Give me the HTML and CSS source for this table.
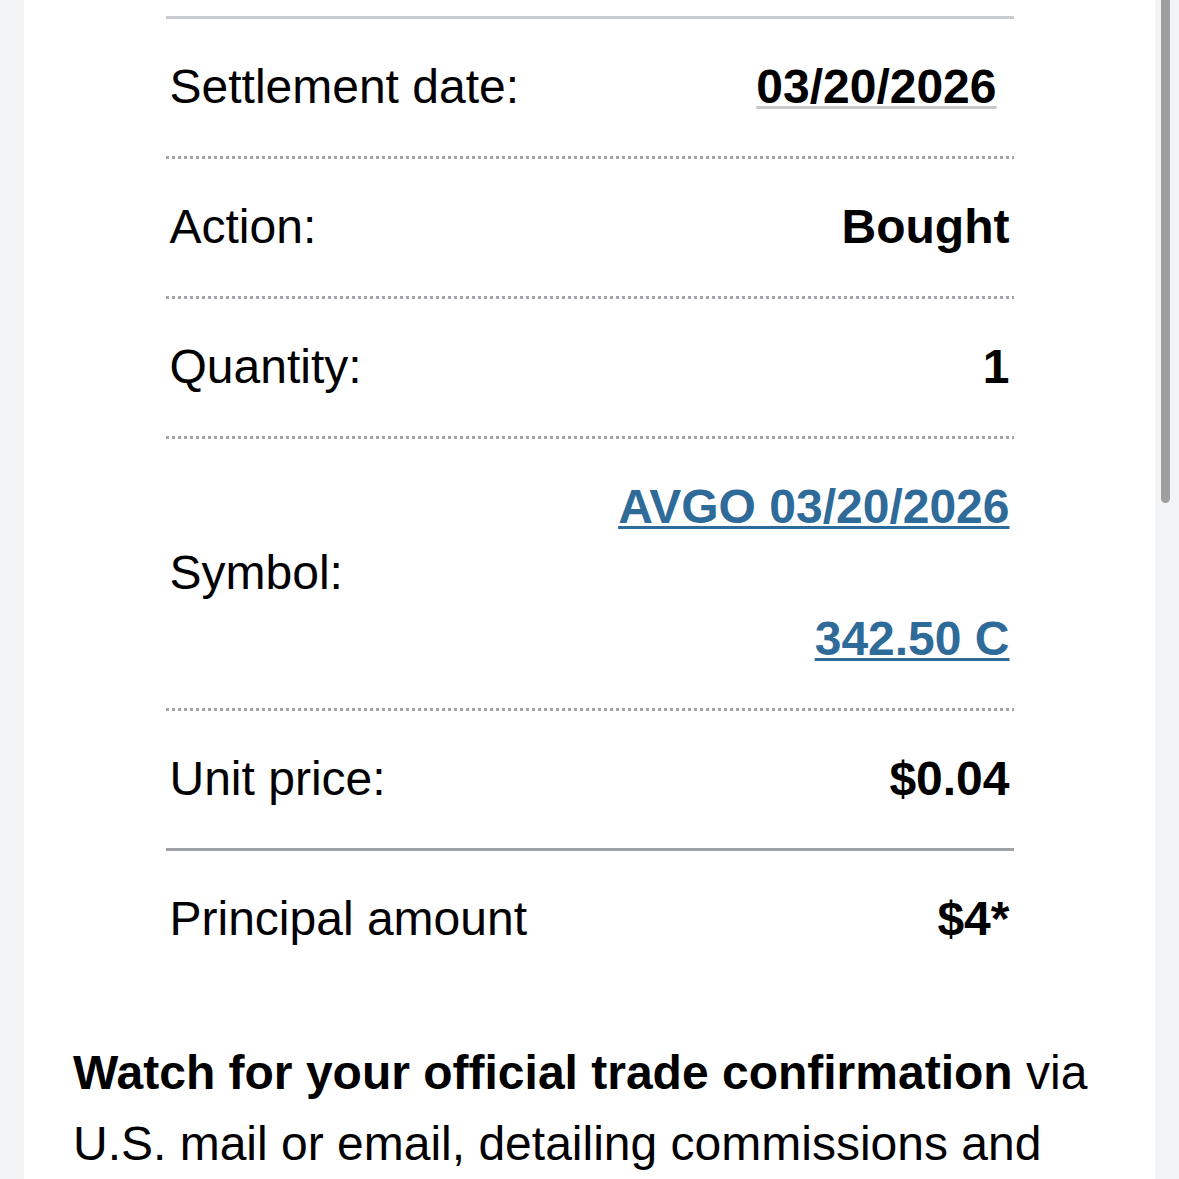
FILE: index.html
```html
<!DOCTYPE html>
<html lang="en">
<head>
<meta charset="utf-8">
<title>Trade details</title>
<link rel="stylesheet" href="styles.css">
</head>
<body>
<div class="card">
  <div class="details">
    <div class="sep solid-light"></div>
    <div class="row">
      <div class="label">Settlement date:</div>
      <div class="value"><span class="date">03/20/2026</span></div>
    </div>
    <div class="sep dotted"></div>
    <div class="row">
      <div class="label">Action:</div>
      <div class="value">Bought</div>
    </div>
    <div class="sep dotted"></div>
    <div class="row">
      <div class="label">Quantity:</div>
      <div class="value">1</div>
    </div>
    <div class="sep dotted"></div>
    <div class="row">
      <div class="label">Symbol:</div>
      <div class="value symbol">
        <a class="link" href="#">AVGO 03/20/2026</a>
        <a class="link" href="#">342.50 C</a>
      </div>
    </div>
    <div class="sep dotted"></div>
    <div class="row">
      <div class="label">Unit price:</div>
      <div class="value">$0.04</div>
    </div>
    <div class="sep solid-dark"></div>
    <div class="row last">
      <div class="label">Principal amount</div>
      <div class="value">$4*</div>
    </div>
  </div>
  <p class="note"><strong>Watch for your official trade confirmation</strong> via U.S. mail or email, detailing commissions and fees for this transaction.</p>
</div>
<div class="scrollbar"><div class="thumb"></div></div>
</body>
</html>
```

FILE: styles.css
```css
html, body {
  margin: 0;
  padding: 0;
  height: 1179px;
  overflow: hidden;
}

body {
  background: #f2f3f5;
  font-family: "Liberation Sans", Arial, sans-serif;
  color: #000;
  position: relative;
}

.card {
  margin-left: 24px;
  width: 1131px;
  height: 1179px;
  box-sizing: border-box;
  background: #fff;
  padding: 16px 49px 0;
}

.details {
  width: 848px;
  margin: 0 auto;
}

.sep {
  height: 3px;
}

.solid-light {
  background: #c9cdd1;
}

.solid-dark {
  background: #9fa3a8;
}

.dotted {
  background-image: linear-gradient(to right, #a2a6ab 3px, transparent 3px);
  background-size: 6px 3px;
  background-repeat: repeat-x;
}

.row {
  display: flex;
  justify-content: space-between;
  align-items: center;
  padding: 39px 4px 41px;
  font-size: 48px;
  line-height: 57px;
}

.value {
  font-weight: bold;
  text-align: right;
}

.date {
  margin-right: 13px;
  text-decoration: underline;
  text-decoration-color: #c9c9c9;
  text-decoration-thickness: 3px;
  text-underline-offset: 3px;
}

.symbol {
  display: flex;
  flex-direction: column;
  align-items: flex-end;
  gap: 75px;
}

.link {
  color: #2f6b99;
  text-decoration: underline;
  text-decoration-thickness: 3px;
  text-underline-offset: 3px;
}

.note {
  margin: 49px 0 0;
  font-size: 48px;
  line-height: 71px;
}

.note strong {
  font-weight: bold;
}

.scrollbar {
  position: absolute;
  top: 0;
  right: 0;
  width: 24px;
  height: 1179px;
}

.thumb {
  position: absolute;
  left: 6px;
  top: -10px;
  width: 9px;
  height: 513px;
  background: #9e9e9e;
  border-radius: 5px;
}
```
